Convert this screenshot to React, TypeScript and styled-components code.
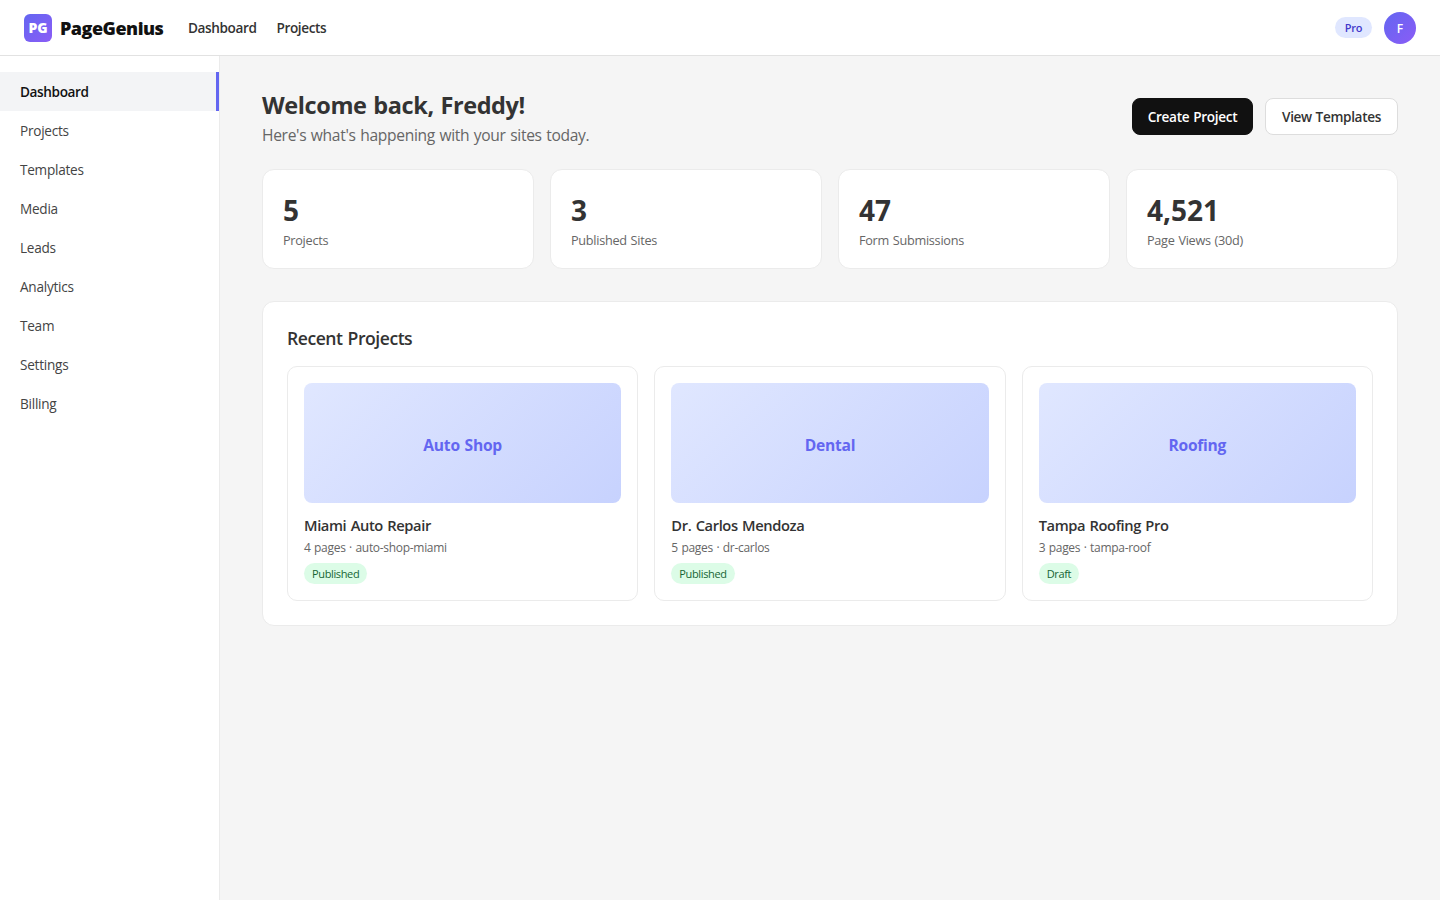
import React from "react";
import styled, { createGlobalStyle } from "styled-components";

const GlobalStyle = createGlobalStyle`
  *, *::before, *::after { box-sizing: border-box; }
  body {
    margin: 0;
    background: #f5f5f5;
    color: #333;
    font-family: "Segoe UI", "Open Sans", "Noto Sans", sans-serif;
  }
  h1, h2, h3, p { margin: 0; }
  a { color: inherit; text-decoration: none; }
  button { font-family: inherit; }
`;

const Page = styled.div`
  display: flex;
  flex-direction: column;
  min-height: 100vh;
`;

const Header = styled.header`
  display: flex;
  align-items: center;
  height: 56px;
  padding: 0 24px;
  background: #fff;
  border-bottom: 1px solid #e2e2e2;
`;

const Logo = styled.a`
  display: flex;
  align-items: center;
  gap: 8px;
  width: 140px;
  color: #111;
  font-size: 18px;
  font-weight: 800;
  line-height: 24px;
  letter-spacing: -0.5px;
  white-space: nowrap;
`;

const LogoMark = styled.span`
  display: flex;
  align-items: center;
  justify-content: center;
  flex: none;
  width: 28px;
  height: 28px;
  border-radius: 6px;
  background: linear-gradient(135deg, #6366f1, #8b5cf6);
  color: #fff;
  font-size: 14px;
  line-height: 19px;
  letter-spacing: -0.2px;
`;

const TopNav = styled.nav`
  display: flex;
  gap: 20px;
  margin-left: 24px;
`;

const TopLink = styled.a`
  color: #333;
  font-size: 13.6px;
  font-weight: 550;
  line-height: 19px;
  letter-spacing: -0.4px;
`;

const Account = styled.div`
  display: flex;
  align-items: center;
  gap: 12px;
  margin-left: auto;
`;

const Plan = styled.span`
  width: 37px;
  padding: 3px 0;
  border-radius: 12px;
  background: #e0e7ff;
  color: #4338ca;
  font-size: 11px;
  font-weight: 550;
  line-height: 15px;
  letter-spacing: -0.2px;
  text-align: center;
`;

const Avatar = styled.div`
  display: flex;
  align-items: center;
  justify-content: center;
  width: 32px;
  height: 32px;
  border-radius: 50%;
  background: linear-gradient(135deg, #6366f1, #8b5cf6);
  color: #fff;
  font-size: 12px;
  font-weight: 600;
  line-height: 16px;
  padding-top: 2px;
`;

const Body = styled.div`
  display: flex;
  flex: 1;
`;

const Sidebar = styled.aside`
  flex: none;
  width: 220px;
  padding-top: 16px;
  background: #fff;
  border-right: 1px solid #ebebeb;
`;

const SideLink = styled.a<{ $active?: boolean }>`
  display: block;
  height: 39px;
  padding: 10px 20px;
  border-right: 3px solid ${(p) => (p.$active ? "#6366f1" : "transparent")};
  background: ${(p) => (p.$active ? "#f3f4f6" : "transparent")};
  color: ${(p) => (p.$active ? "#111" : "#444")};
  font-size: 13.6px;
  font-weight: ${(p) => (p.$active ? 550 : 400)};
  line-height: 19px;
  letter-spacing: ${(p) => (p.$active ? -0.38 : -0.25)}px;
`;

const Main = styled.main`
  flex: 1;
  min-width: 0;
`;

const Content = styled.div`
  max-width: 1200px;
  margin: 0 auto;
  padding: 32px;
`;

const Welcome = styled.div`
  display: flex;
  align-items: center;
  justify-content: space-between;
  height: 57px;
  margin-bottom: 24px;
`;

const Title = styled.h1`
  padding-top: 2px;
  font-size: 23.5px;
  font-weight: 700;
  line-height: 32px;
  letter-spacing: -0.4px;
  word-spacing: 1px;
`;

const Subtitle = styled.p`
  margin-top: 4px;
  color: #666;
  font-size: 15.6px;
  line-height: 21px;
  letter-spacing: -0.32px;
  word-spacing: 0.8px;
`;

const Actions = styled.div`
  display: flex;
  gap: 12px;
`;

const Button = styled.button<{ $primary?: boolean }>`
  width: ${(p) => (p.$primary ? 121 : 133)}px;
  height: 37px;
  padding: 0;
  border: 1px solid ${(p) => (p.$primary ? "#111" : "#ddd")};
  border-radius: 8px;
  background: ${(p) => (p.$primary ? "#111" : "#fff")};
  color: ${(p) => (p.$primary ? "#fff" : "#333")};
  font-size: 13.6px;
  font-weight: ${(p) => (p.$primary ? 600 : 550)};
  line-height: 19px;
  letter-spacing: ${(p) => (p.$primary ? -0.3 : -0.35)}px;
  word-spacing: 0.6px;
  white-space: nowrap;
`;

const Stats = styled.section`
  display: grid;
  grid-template-columns: repeat(4, 1fr);
  gap: 16px;
  margin-bottom: 32px;
`;

const Stat = styled.div`
  height: 100px;
  padding: 22px 20px 18px;
  border: 1px solid #ebebeb;
  border-radius: 12px;
  background: #fff;
`;

const StatValue = styled.div`
  font-size: 28px;
  font-weight: 700;
  line-height: 37px;
`;

const StatLabel = styled.div`
  margin-top: 3px;
  color: #666;
  font-size: 12.7px;
  line-height: 17px;
  letter-spacing: -0.28px;
  word-spacing: 0.8px;
`;

const Panel = styled.section`
  padding: 24px;
  border: 1px solid #ebebeb;
  border-radius: 12px;
  background: #fff;
`;

const PanelTitle = styled.h2`
  margin-bottom: 16px;
  font-size: 17.6px;
  font-weight: 550;
  line-height: 24px;
  letter-spacing: -0.48px;
  word-spacing: 1px;
`;

const Projects = styled.div`
  display: grid;
  grid-template-columns: repeat(3, 1fr);
  gap: 16px;
`;

const Card = styled.article`
  padding: 16px;
  border: 1px solid #ebebeb;
  border-radius: 10px;
`;

const Thumb = styled.div`
  display: flex;
  align-items: center;
  justify-content: center;
  height: 120px;
  margin-bottom: 12px;
  padding-top: 3px;
  border-radius: 8px;
  background: linear-gradient(135deg, #e0e7ff, #c7d2fe);
  color: #6366f1;
  font-size: 15.6px;
  font-weight: 700;
  letter-spacing: -0.25px;
  word-spacing: 1px;
`;

const CardName = styled.h3`
  font-size: 14.7px;
  font-weight: 550;
  line-height: 20px;
  letter-spacing: -0.4px;
  word-spacing: 1px;
`;

const CardMeta = styled.p`
  margin-top: 5px;
  color: #666;
  font-size: 12px;
  line-height: 16px;
  letter-spacing: -0.3px;
  word-spacing: 0.7px;
`;

const Status = styled.span`
  display: block;
  width: fit-content;
  margin-top: 7px;
  padding: 3px 8px;
  border-radius: 12px;
  background: #dcfce7;
  color: #166534;
  font-size: 11px;
  line-height: 15px;
  letter-spacing: -0.36px;
`;

const sections = ["Dashboard", "Projects", "Templates", "Media", "Leads", "Analytics", "Team", "Settings", "Billing"];

const stats = [
  { value: "5", label: "Projects" },
  { value: "3", label: "Published Sites" },
  { value: "47", label: "Form Submissions" },
  { value: "4,521", label: "Page Views (30d)" },
];

const projects = [
  { kind: "Auto Shop", name: "Miami Auto Repair", meta: "4 pages · auto-shop-miami", status: "Published" },
  { kind: "Dental", name: "Dr. Carlos Mendoza", meta: "5 pages · dr-carlos", status: "Published" },
  { kind: "Roofing", name: "Tampa Roofing Pro", meta: "3 pages · tampa-roof", status: "Draft" },
];

export default function App() {
  return (
    <Page>
      <GlobalStyle />
      <Header>
        <Logo href="#">
          <LogoMark>PG</LogoMark>
          <span>PageGenius</span>
        </Logo>
        <TopNav>
          <TopLink href="#">Dashboard</TopLink>
          <TopLink href="#">Projects</TopLink>
        </TopNav>
        <Account>
          <Plan>Pro</Plan>
          <Avatar>F</Avatar>
        </Account>
      </Header>
      <Body>
        <Sidebar>
          {sections.map((name, i) => (
            <SideLink key={name} href="#" $active={i === 0}>{name}</SideLink>
          ))}
        </Sidebar>
        <Main>
          <Content>
            <Welcome>
              <div>
                <Title>Welcome back, Freddy!</Title>
                <Subtitle>Here's what's happening with your sites today.</Subtitle>
              </div>
              <Actions>
                <Button $primary>Create Project</Button>
                <Button>View Templates</Button>
              </Actions>
            </Welcome>
            <Stats>
              {stats.map((s) => (
                <Stat key={s.label}>
                  <StatValue>{s.value}</StatValue>
                  <StatLabel>{s.label}</StatLabel>
                </Stat>
              ))}
            </Stats>
            <Panel>
              <PanelTitle>Recent Projects</PanelTitle>
              <Projects>
                {projects.map((p) => (
                  <Card key={p.name}>
                    <Thumb>{p.kind}</Thumb>
                    <CardName>{p.name}</CardName>
                    <CardMeta>{p.meta}</CardMeta>
                    <Status>{p.status}</Status>
                  </Card>
                ))}
              </Projects>
            </Panel>
          </Content>
        </Main>
      </Body>
    </Page>
  );
}
